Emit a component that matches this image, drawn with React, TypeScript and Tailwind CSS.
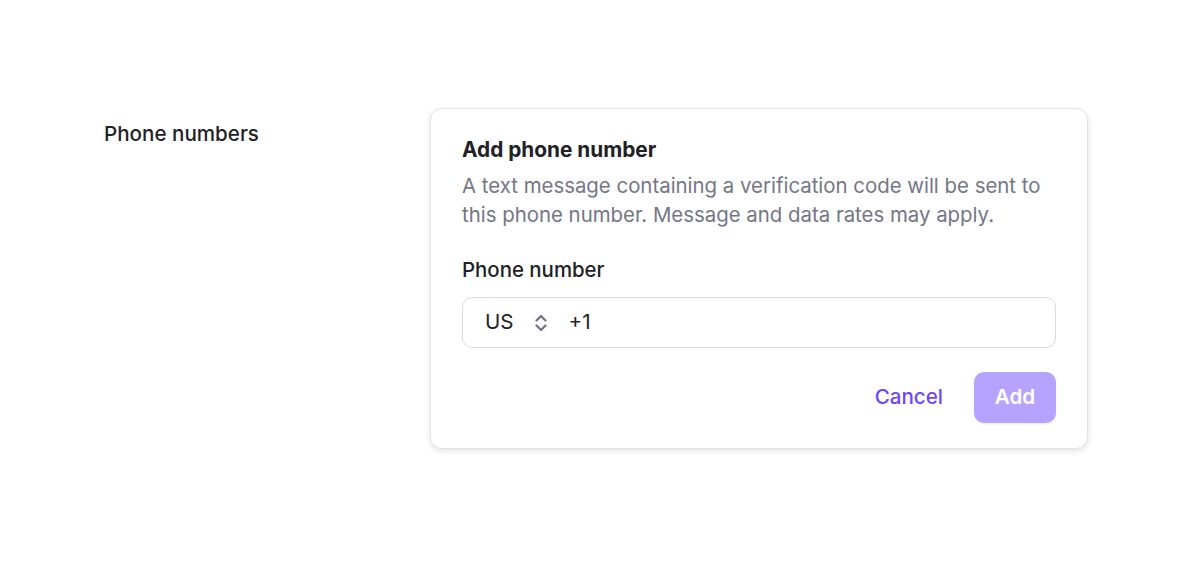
import React from "react";

export default function App() {
  return (
    <div className="min-h-[567px] w-[1200px] bg-white font-['Inter',sans-serif] text-[#212126]">
      <div className="flex items-start pl-[104px] pt-[108px]">
        <div className="w-[326px] pt-[14px] text-[20.6px] font-medium leading-[24px]">Phone numbers</div>
        <div className="w-[658px] rounded-[12px] border border-[#e3e3e6] bg-white px-[31px] pt-[26px] pb-[23px] shadow-[0_2px_6px_rgba(0,0,0,0.12)]">
          <div className="text-[20.8px] font-bold leading-[30px]">Add phone number</div>
          <p className="mt-[6px] text-[20.4px] leading-[29px] text-[#747686]">
            A text message containing a verification code will be sent to this phone number. Message and data rates may apply.
          </p>
          <div className="mt-[26px] text-[20.4px] font-medium leading-[30px]">Phone number</div>
          <div className="mt-[12px] flex h-[51px] items-center rounded-[10px] border border-[#d9d9de] px-[22px] text-[20.6px]">
            <span>US</span>
            <svg className="ml-[19px] h-[20px] w-[16px] text-[#747686]" viewBox="0 0 16 20" fill="none" stroke="currentColor" strokeWidth="2.3" strokeLinecap="round" strokeLinejoin="round">
              <path d="M3.5 7.5 8 3l4.5 4.5" />
              <path d="M3.5 12.5 8 17l4.5-4.5" />
            </svg>
            <span className="ml-[20px]">+1</span>
          </div>
          <div className="mt-[22px] flex items-center justify-end gap-[16px]">
            <button className="px-[15px] py-[12px] text-[20.6px] font-medium text-[#6c47ff]">Cancel</button>
            <button className="h-[51px] w-[82px] rounded-[10px] bg-[#b6a3ff] text-[20.6px] font-semibold text-white shadow-[0_1px_2px_rgba(0,0,0,0.08)]">Add</button>
          </div>
        </div>
      </div>
    </div>
  );
}
